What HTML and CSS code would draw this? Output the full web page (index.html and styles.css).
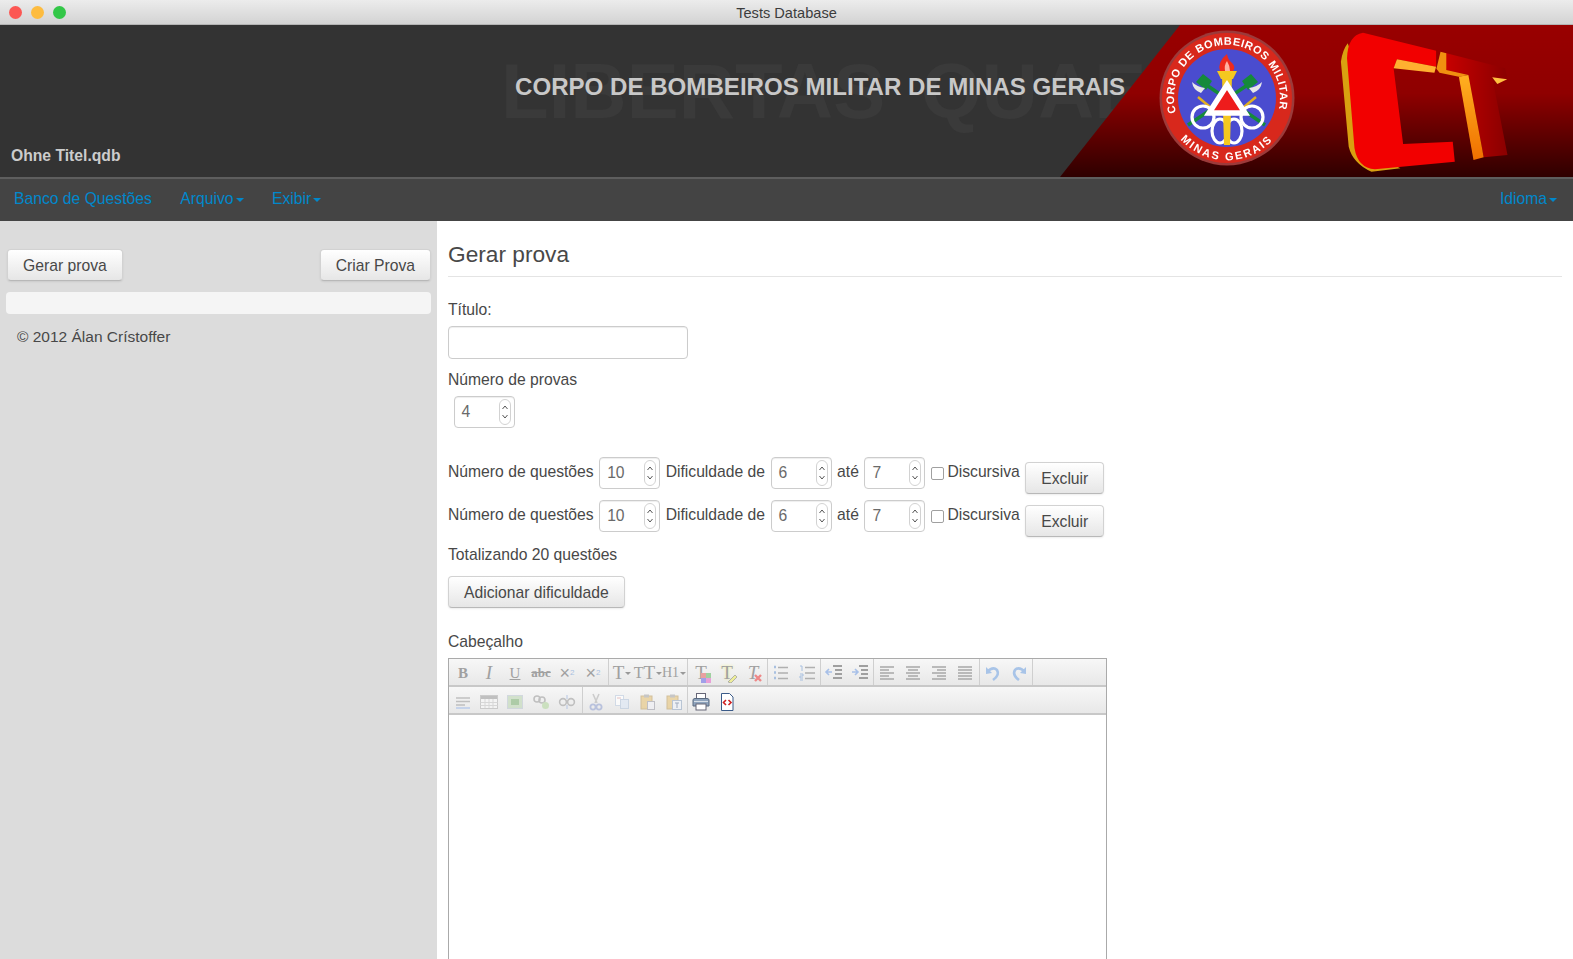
FILE: index.html
```html
<!DOCTYPE html>
<html>
<head>
  <title>Tests Database</title>
  <link rel="stylesheet" href="styles.css">
</head>
<body>

<div class="window">
  <div class="titlebar">
    <div class="lights">
      <span class="light red"></span>
      <span class="light yellow"></span>
      <span class="light green"></span>
    </div>
    <span class="window-title">Tests Database</span>
  </div>

  <div class="banner">
    <svg class="banner-art" viewBox="0 25 1573 152" width="1573" height="152">
      <defs>
        <linearGradient id="redfade" x1="0" y1="0" x2="0" y2="1">
          <stop offset="0" stop-color="#990000"/>
          <stop offset="0.45" stop-color="#8f0000"/>
          <stop offset="1" stop-color="#2e0000"/>
        </linearGradient>
        <linearGradient id="tbar" x1="0" y1="0" x2="1" y2="0">
          <stop offset="0" stop-color="#c80000"/>
          <stop offset="1" stop-color="#8a0000"/>
        </linearGradient>
        <linearGradient id="tstrip" x1="0" y1="0" x2="0" y2="1">
          <stop offset="0" stop-color="#ffb020"/>
          <stop offset="1" stop-color="#f07000"/>
        </linearGradient>
        <path id="ringtop" d="M1176.100 112.600 A 53 53 0 1 1 1277.900 112.600"/>
        <path id="ringbottom" d="M1175 132 A 62 62 0 0 0 1279 132"/>
      </defs>
      <text class="motto" x="501" y="118">LIBERTAS QUAE</text>
      <polygon points="1180,25 1573,25 1573,177 1060,177" fill="url(#redfade)"/>

      <!-- emblem -->
      <circle cx="1227" cy="98" r="67.500" fill="#9c3a3a"/>
      <circle cx="1227" cy="98" r="65" fill="#d8281c"/>
      <circle cx="1227" cy="98" r="49" fill="#4a4ccf"/>
      <text class="ring-text"><textPath href="#ringtop" textLength="192">CORPO DE BOMBEIROS MILITAR</textPath></text>
      <text class="ring-text wide"><textPath href="#ringbottom" startOffset="50%" text-anchor="middle">MINAS GERAIS</textPath></text>
      <g stroke="#158a3a" stroke-width="3.500" fill="none">
        <path d="M1205 84 L1265 125"/>
        <path d="M1249 84 L1188 125"/>
      </g>
      <path d="M1196 82 l7 -8 l9 7 l-6 9 z" fill="#158a3a"/>
      <path d="M1258 82 l-7 -8 l-9 7 l6 9 z" fill="#158a3a"/>
      <path d="M1192 82 q1 8 9 11 l4 -5 q-8 -1 -13 -6z" fill="#e8e8e8"/>
      <path d="M1262 82 q-1 8 -9 11 l-4 -5 q8 -1 13 -6z" fill="#e8e8e8"/>
      <path d="M1198 97 L1210 107 M1256 97 L1244 107" stroke="#e0b020" stroke-width="2.500"/>
      <g stroke="#fff" stroke-width="3.200" fill="none">
        <circle cx="1203" cy="117" r="11"/>
        <circle cx="1252" cy="117" r="11"/>
        <ellipse cx="1220" cy="131" rx="8" ry="12"/>
        <ellipse cx="1234" cy="131" rx="8" ry="12"/>
      </g>
      <path d="M1222 76 h10 l-2 69 h-6 z" fill="#f4c820"/>
      <path d="M1217 71 h20 l-4 8 h-12 z" fill="#f4c820"/>
      <path d="M1220 71 q-3 -9 7 -17 q1 6 5 9 q4 4 1 8 z" fill="#ee2a1c"/>
      <path d="M1225 71 q-1 -6 2 -10 q3 5 3 10 z" fill="#ffb0a0"/>
      <polygon points="1227,85 1209,113 1245,113" fill="#ee1c1c" stroke="#fff" stroke-width="5.500" stroke-linejoin="miter"/>

      <!-- CT logo, coordinates traced from the crop -->
      <g transform="translate(1040 0) scale(0.34 0.3333)">
        <path d="M905 130 Q890 150 885 185 L908 440 Q920 490 975 515 L1060 505 L990 470 L930 200 Z" fill="#d9a010"/>
        <path d="M950 98 Q905 105 903 175 L925 445 Q935 505 985 508 L1220 485 L1214 425 L1068 432 L1040 205 L1050 178 L1165 200 L1165 152 Z" fill="#f20000"/>
        <path d="M1050 178 L1165 200 L1160 218 L1040 205 Z" fill="#ffb030"/>
        <path d="M1190 158 L1368 205 L1374 232 L1330 232 L1375 465 L1305 472 L1260 225 L1195 210 Z" fill="url(#tbar)"/>
        <path d="M1178 155 L1195 160 L1195 210 L1260 225 L1232 230 L1175 218 L1166 206 Z" fill="#f09010"/>
        <path d="M1232 230 L1260 225 L1305 472 L1275 480 Z" fill="url(#tstrip)"/>
        <path d="M1330 232 L1374 238 L1345 252 Z" fill="#ffc040"/>
      </g>
    </svg>
    <h1 class="banner-title">CORPO DE BOMBEIROS MILITAR DE MINAS GERAIS</h1>
    <span class="file-name">Ohne Titel.qdb</span>
  </div>

  <div class="navbar">
    <a class="brand">Banco de Questões</a>
    <a class="menu">Arquivo<i class="caret"></i></a>
    <a class="menu">Exibir<i class="caret"></i></a>
    <a class="menu language">Idioma<i class="caret"></i></a>
  </div>

  <div class="content">
    <div class="sidebar">
      <div class="side-buttons">
        <button class="btn">Gerar prova</button>
        <button class="btn">Criar Prova</button>
      </div>
      <div class="well"></div>
      <p class="copyright">© 2012 Álan Crístoffer</p>
    </div>

    <div class="main">
      <h2 class="page-title">Gerar prova</h2>

      <label class="field-label">Título:</label>
      <input type="text" class="text-input">

      <label class="field-label second">Número de provas</label>
      <div class="spinner exams"><span>4</span><svg viewBox="0 0 12 26"><rect x="0.5" y="0.5" width="11" height="25" rx="5.5"/><path d="M3.5 10 L6 7 L8.5 10 M3.5 16 L6 19 L8.5 16"/></svg></div>

      <div class="difficulty first">
        <span>Número de questões</span>
        <div class="spinner"><span>10</span><svg viewBox="0 0 12 26"><rect x="0.5" y="0.5" width="11" height="25" rx="5.5"/><path d="M3.5 10 L6 7 L8.5 10 M3.5 16 L6 19 L8.5 16"/></svg></div>
        <span>Dificuldade de</span>
        <div class="spinner"><span>6</span><svg viewBox="0 0 12 26"><rect x="0.5" y="0.5" width="11" height="25" rx="5.5"/><path d="M3.5 10 L6 7 L8.5 10 M3.5 16 L6 19 L8.5 16"/></svg></div>
        <span>até</span>
        <div class="spinner"><span>7</span><svg viewBox="0 0 12 26"><rect x="0.5" y="0.5" width="11" height="25" rx="5.5"/><path d="M3.5 10 L6 7 L8.5 10 M3.5 16 L6 19 L8.5 16"/></svg></div>
        <i class="checkbox"></i>
        <span>Discursiva</span>
        <button class="btn remove">Excluir</button>
      </div>
      <div class="difficulty">
        <span>Número de questões</span>
        <div class="spinner"><span>10</span><svg viewBox="0 0 12 26"><rect x="0.5" y="0.5" width="11" height="25" rx="5.5"/><path d="M3.5 10 L6 7 L8.5 10 M3.5 16 L6 19 L8.5 16"/></svg></div>
        <span>Dificuldade de</span>
        <div class="spinner"><span>6</span><svg viewBox="0 0 12 26"><rect x="0.5" y="0.5" width="11" height="25" rx="5.5"/><path d="M3.5 10 L6 7 L8.5 10 M3.5 16 L6 19 L8.5 16"/></svg></div>
        <span>até</span>
        <div class="spinner"><span>7</span><svg viewBox="0 0 12 26"><rect x="0.5" y="0.5" width="11" height="25" rx="5.5"/><path d="M3.5 10 L6 7 L8.5 10 M3.5 16 L6 19 L8.5 16"/></svg></div>
        <i class="checkbox"></i>
        <span>Discursiva</span>
        <button class="btn remove">Excluir</button>
      </div>

      <p class="total">Totalizando 20 questões</p>
      <button class="btn add">Adicionar dificuldade</button>

      <label class="field-label header-label">Cabeçalho</label>
      <div class="editor">
        <div class="toolbar">
          <div class="tool-group">
            <span class="tool t-serif bold">B</span>
            <span class="tool t-serif italic big">I</span>
            <span class="tool t-serif under">U</span>
            <span class="tool t-serif strike">abc</span>
            <span class="tool t-sign">×<sub>2</sub></span>
            <span class="tool t-sign">×<sup>2</sup></span>
          </div>
          <div class="tool-group">
            <span class="tool t-serif big">T<i class="mini-caret"></i></span>
            <span class="tool t-serif big"><small>T</small>T<i class="mini-caret"></i></span>
            <span class="tool t-serif">H1<i class="mini-caret"></i></span>
          </div>
          <div class="tool-group pad">
            <span class="tool t-serif big">T<svg class="corner" viewBox="0 0 10 10"><rect width="5" height="5" fill="#e8a0a0"/><rect x="5" width="5" height="5" fill="#a0d0a0"/><rect y="5" width="5" height="5" fill="#a0a0e8"/><rect x="5" y="5" width="5" height="5" fill="#e8a0d8"/></svg></span>
            <span class="tool t-serif big marker">T<svg class="corner" viewBox="0 0 10 10"><path d="M1 9 L8 2 L10 4 L4 10 Z" fill="#eeee99" stroke="#999" stroke-width="0.7"/></svg></span>
            <span class="tool t-serif big italic">T<svg class="corner" viewBox="0 0 10 10"><path d="M2 2 L8 8 M8 2 L2 8" stroke="#ee8888" stroke-width="2.4"/></svg></span>
          </div>
          <div class="tool-group">
            <span class="tool"><svg class="ico" viewBox="0 0 20 20"><path d="M3 4h2M3 9.500h2M3 15h2" stroke="#a8c0e0" stroke-width="2.400"/><path d="M7 4.500h10M7 10h10M7 15.500h10" stroke="#b0b0b0" stroke-width="1.500"/></svg></span>
            <span class="tool"><svg class="ico" viewBox="0 0 20 20"><path d="M3 3h2v5M3 11h3v2h-3v2h3M3 17h3" stroke="#a8c0e0" fill="none"/><path d="M8 4.500h10M8 10h10M8 15.500h10" stroke="#b0b0b0" stroke-width="1.500"/></svg></span>
          </div>
          <div class="tool-group">
            <span class="tool"><svg class="ico" viewBox="0 0 20 20"><path d="M9 3h9M11 7h7M11 11h7M9 15h9" stroke="#a0a0a0" stroke-width="2"/><path d="M8 9H2M5 6L2 9l3 3" stroke="#a8c0e8" stroke-width="1.600" fill="none"/></svg></span>
            <span class="tool"><svg class="ico" viewBox="0 0 20 20"><path d="M9 3h9M11 7h7M11 11h7M9 15h9" stroke="#a0a0a0" stroke-width="2"/><path d="M2 9h6M5 6l3 3-3 3" stroke="#a8c0e8" stroke-width="1.600" fill="none"/></svg></span>
          </div>
          <div class="tool-group pad">
            <span class="tool"><svg class="ico" viewBox="0 0 20 20"><path d="M3 4h14M3 7h9M3 10h14M3 13h9M3 16h14" stroke="#a8a8a8" stroke-width="1.500"/></svg></span>
            <span class="tool"><svg class="ico" viewBox="0 0 20 20"><path d="M3 4h14M5 7h10M3 10h14M5 13h10M3 16h14" stroke="#a8a8a8" stroke-width="1.500"/></svg></span>
            <span class="tool"><svg class="ico" viewBox="0 0 20 20"><path d="M3 4h14M8 7h9M3 10h14M8 13h9M3 16h14" stroke="#a8a8a8" stroke-width="1.500"/></svg></span>
            <span class="tool"><svg class="ico" viewBox="0 0 20 20"><path d="M3 4h14M3 7h14M3 10h14M3 13h14M3 16h14" stroke="#a8a8a8" stroke-width="1.500"/></svg></span>
          </div>
          <div class="tool-group">
            <span class="tool"><svg class="ico" viewBox="0 0 20 20"><path d="M4 9 Q10 3 14 7 Q17 12 10 17" stroke="#a8c4e8" stroke-width="2.600" fill="none"/><path d="M3 4 L3 11 L9 10 Z" fill="#a8c4e8"/></svg></span>
            <span class="tool"><svg class="ico" viewBox="0 0 20 20"><path d="M16 9 Q10 3 6 7 Q3 12 10 17" stroke="#a8c4e8" stroke-width="2.600" fill="none"/><path d="M17 4 L17 11 L11 10 Z" fill="#a8c4e8"/></svg></span>
          </div>
        </div>

        <div class="toolbar lower">
          <div class="tool-group">
            <span class="tool dim"><svg class="ico" viewBox="0 0 20 20"><path d="M3 6h14M3 9.500h14M3 13h9" stroke="#b0b0b0" stroke-width="1.500"/><path d="M3 16h14" stroke="#a8c0e8" stroke-width="1.500"/></svg></span>
            <span class="tool dim"><svg class="ico" viewBox="0 0 20 20"><rect x="1.500" y="3.500" width="17" height="13" fill="#f6f6f6" stroke="#c0c0c0"/><rect x="2" y="4" width="16" height="3" fill="#b0b0b0"/><path d="M1.500 10.500h17M1.500 13.500h17M6 7v9M10 7v9M14 7v9" stroke="#d0d0d0"/></svg></span>
            <span class="tool dim"><svg class="ico" viewBox="0 0 20 20"><rect x="2.500" y="3.500" width="15" height="13" fill="#c8dcc0" stroke="#c8d0d8"/><path d="M6 7h8v6H6z" fill="#98c090"/></svg></span>
            <span class="tool dim"><svg class="ico" viewBox="0 0 20 20"><circle cx="6" cy="7" r="3" stroke="#b0b0b0" stroke-width="1.600" fill="none"/><circle cx="11" cy="8" r="3" stroke="#b0b0b0" stroke-width="1.600" fill="none"/><circle cx="14.500" cy="13.500" r="3.500" fill="#c0dcb0"/></svg></span>
            <span class="tool dim"><svg class="ico" viewBox="0 0 20 20"><circle cx="6" cy="10" r="3.400" stroke="#b0b0b0" stroke-width="1.600" fill="none"/><circle cx="14" cy="10" r="3.400" stroke="#b0b0b0" stroke-width="1.600" fill="none"/><path d="M10 3v4M10 13v4" stroke="#b8c8e4" stroke-width="1.400"/></svg></span>
          </div>
          <div class="tool-group">
            <span class="tool dim"><svg class="ico" viewBox="0 0 20 20"><path d="M7 2l4 9M13 2l-4 9" stroke="#c0c0c0" stroke-width="1.600"/><circle cx="7" cy="15" r="2.600" stroke="#a8b4d8" stroke-width="1.800" fill="none"/><circle cx="13" cy="15" r="2.600" stroke="#a8b4d8" stroke-width="1.800" fill="none"/></svg></span>
            <span class="tool dim"><svg class="ico" viewBox="0 0 20 20"><rect x="3.500" y="3.500" width="8" height="10" fill="#fff" stroke="#c8d4e4"/><rect x="8.500" y="7.500" width="8" height="9" fill="#dfe8f4" stroke="#c0cee0"/><path d="M5 6h4" stroke="#e0b0b0"/></svg></span>
            <span class="tool dim"><svg class="ico" viewBox="0 0 20 20"><rect x="3" y="4" width="11" height="13" fill="#e8cc90" stroke="#c8b080"/><rect x="6" y="2.500" width="5" height="3" fill="#b8b8b8"/><rect x="9.500" y="9.500" width="7" height="8" fill="#f0f0f4" stroke="#b0b0b8"/></svg></span>
            <span class="tool dim"><svg class="ico" viewBox="0 0 20 20"><rect x="3" y="4" width="11" height="13" fill="#e8cc90" stroke="#c8b080"/><rect x="6" y="2.500" width="5" height="3" fill="#b8b8b8"/><rect x="8.500" y="8.500" width="9" height="9" fill="#eef2f8" stroke="#a8b8cc"/><path d="M11 11h4M13 11v5" stroke="#8898b0"/></svg></span>
          </div>
          <div class="tool-group plain">
            <span class="tool"><svg class="ico" viewBox="0 0 20 20"><rect x="5.500" y="1.500" width="9" height="6" fill="#fff" stroke="#667"/><path d="M2 8 Q2 6.500 4 6.500 H16 Q18 6.500 18 8 V14 H2 Z" fill="#8fa4bd" stroke="#5a6a80"/><rect x="5" y="12" width="10" height="6" fill="#fff" stroke="#667"/><path d="M3 9.500h14" stroke="#d8e0e8"/></svg></span>
            <span class="tool"><svg class="ico" viewBox="0 0 20 20"><path d="M4.500 1.500h8l3.500 3.500v13.500h-11.500z" fill="#fff" stroke="#3a5a88"/><path d="M9 8 L6.500 10.500 L9 13" stroke="#d02020" stroke-width="1.600" fill="none"/><path d="M11.500 8 L14 10.500 L11.500 13" stroke="#d02020" stroke-width="1.600" fill="none"/></svg></span>
          </div>
        </div>

        <div class="editor-body"></div>
      </div>
    </div>
  </div>
</div>

</body>
</html>
```
FILE: styles.css
```css
body {
  font-family: "Liberation Sans", Arial, sans-serif;
  font-size: 15.7px;
  color: #484848;
  background-color: #fff;
  margin: 0;
}

.window {
  height: 959px;
  display: flex;
  flex-direction: column;
  overflow: hidden;
}

.titlebar {
  height: 24px;
  flex: none;
  display: flex;
  align-items: center;
  justify-content: center;
  position: relative;
  background: linear-gradient(#ececec, #d3d3d3);
  border-bottom: 1px solid #b4b4b4;
}

.lights {
  position: absolute;
  left: 9px;
  top: 6px;
  display: flex;
  gap: 9px;
}

.light {
  width: 13px;
  height: 13px;
  border-radius: 50%;
}

.light.red { background-color: #fc5753; }
.light.yellow { background-color: #fdbc40; }
.light.green { background-color: #33c748; }

.window-title {
  padding-top: 1px;
  font-size: 14.6px;
  color: #3c3c3c;
}

.banner {
  height: 152px;
  flex: none;
  position: relative;
  display: flex;
  align-items: flex-end;
  background-color: #333;
  border-bottom: 2px solid #5e5e5e;
}

.banner-art {
  position: absolute;
  left: 0;
  top: 0;
  filter: blur(0.4px);
}

.motto {
  font-size: 78px;
  font-weight: bold;
  word-spacing: 14px;
  fill: #3a3a3a;
}

.ring-text {
  font-size: 11px;
  font-weight: bold;
  fill: #fff;
}

.ring-text.wide {
  letter-spacing: 2px;
}

.banner-title {
  position: absolute;
  left: 515px;
  top: 48px;
  margin: 0;
  font-size: 24.1px;
  font-weight: bold;
  color: #c8c8c8;
  white-space: nowrap;
}

.file-name {
  position: relative;
  margin: 0 0 12px 11px;
  font-weight: bold;
  color: #ccc;
}

.navbar {
  height: 40px;
  flex: none;
  display: flex;
  align-items: center;
  gap: 28.5px;
  padding: 0 14px 2px;
  background-color: #444;
  color: #0088cc;
}

.caret {
  display: inline-block;
  margin-left: 2px;
  vertical-align: middle;
  border-top: 4px solid #0088cc;
  border-left: 4px solid transparent;
  border-right: 4px solid transparent;
}

.language {
  margin-left: auto;
  margin-right: 2px;
}

.content {
  flex: 1;
  display: flex;
  min-height: 0;
}

.sidebar {
  width: 425px;
  flex: none;
  padding: 28px 6px 0;
  background-color: #dcdcdc;
}

.side-buttons {
  display: flex;
  justify-content: space-between;
  padding: 0 0 0 1px;
}

.btn {
  height: 32px;
  padding: 1px 15px 0;
  font-family: inherit;
  font-size: 15.7px;
  color: #484848;
  background: linear-gradient(#fff, #e6e6e6);
  border: 1px solid #d2d2d2;
  border-bottom-color: #b8b8b8;
  border-radius: 4px;
  box-shadow: 0 1px 2px rgba(0, 0, 0, 0.08);
}

.well {
  height: 22px;
  margin-top: 11px;
  background-color: #f5f5f5;
  border-radius: 4px;
}

.copyright {
  margin: 13px 0 0 11px;
  font-size: 15.5px;
  line-height: 20px;
}

.main {
  flex: 1;
  padding: 0 11px 0 11px;
  min-width: 0;
}

.page-title {
  margin: 19px 0 0;
  padding-bottom: 8px;
  font-size: 22.7px;
  font-weight: normal;
  line-height: 28px;
  border-bottom: 1px solid #e4e4e4;
}

.field-label {
  display: block;
  line-height: 20px;
  margin-top: 23px;
}

.field-label.second {
  margin-top: 11px;
}

.text-input {
  display: block;
  width: 240px;
  height: 33px;
  margin-top: 6px;
  box-sizing: border-box;
  border: 1px solid #ccc;
  border-radius: 4px;
  box-shadow: inset 0 1px 1px rgba(0, 0, 0, 0.07);
}

.spinner {
  width: 61px;
  height: 32px;
  flex: none;
  box-sizing: border-box;
  display: flex;
  align-items: center;
  justify-content: space-between;
  padding: 0 3px 0 7px;
  color: #6a6a6a;
  background-color: #fff;
  border: 1px solid #ccc;
  border-radius: 4px;
  box-shadow: inset 0 1px 1px rgba(0, 0, 0, 0.07);
}

.spinner svg {
  width: 12px;
  height: 26px;
}

.spinner rect {
  fill: #fff;
  stroke: #d2d2d2;
}

.spinner path {
  fill: none;
  stroke: #555;
}

.spinner.exams {
  margin: 6px 0 0 5.5px;
}

.difficulty {
  display: flex;
  align-items: flex-start;
  gap: 5.5px;
  height: 43px;
  line-height: 30px;
}

.difficulty.first {
  margin-top: 29px;
}

.checkbox {
  width: 13px;
  height: 13px;
  margin-top: 10px;
  margin-right: -2px;
  box-sizing: border-box;
  background-color: #fff;
  border: 1px solid #a0a0a0;
  border-radius: 2px;
}

.remove {
  margin-top: 5px;
}

.total {
  margin: 0;
  line-height: 20px;
  padding-top: 2px;
}

.add {
  display: block;
  margin-top: 11px;
}

.header-label {
  margin-top: 24px;
}

.editor {
  width: 659px;
  margin-top: 6px;
  box-sizing: border-box;
  height: 320px;
  border: 1px solid #aaa;
  border-bottom: none;
}

.toolbar {
  height: 26px;
  padding-left: 1px;
  display: flex;
  align-items: center;
  background: linear-gradient(#f7f7f7, #e8e8e8);
  border-bottom: 2px solid #c8c8c8;
}

.tool-group {
  height: 100%;
  display: flex;
  align-items: center;
  border-right: 1px solid #cfcfcf;
}

.tool-group:first-child {
  padding-right: 2px;
}

.tool-group.pad {
  padding-right: 1px;
}

.tool-group.plain {
  border-right: none;
}

.tool {
  width: 26px;
  height: 24px;
  margin-top: 2px;
  position: relative;
  display: flex;
  align-items: center;
  justify-content: center;
  color: #a0a0a0;
  font-size: 14px;
}

.lower .tool {
  margin-top: 4px;
}

.t-serif {
  font-family: "Liberation Serif", serif;
}

.t-sign {
  font-size: 18px;
  line-height: 18px;
}

.t-sign sub,
.t-sign sup {
  font-size: 8px;
  color: #a8c0e0;
}

.t-serif.big {
  font-size: 19px;
}

.t-serif small {
  font-size: 16px;
}

.bold { font-weight: bold; font-size: 15px; }
.italic { font-style: italic; }
.under { text-decoration: underline; font-size: 15px; }
.strike { text-decoration: line-through; font-weight: bold; font-size: 13px; }

.mini-caret {
  margin-left: 1px;
  border-top: 3px solid #999;
  border-left: 3px solid transparent;
  border-right: 3px solid transparent;
}

.corner {
  position: absolute;
  right: 3px;
  bottom: 2px;
  width: 10px;
  height: 10px;
}

.marker {
  text-shadow: 0 0 3px #eeee88;
}

.ico {
  width: 20px;
  height: 20px;
}

.dim {
  opacity: 0.75;
}

.editor-body {
  height: 100%;
  background-color: #fff;
}
```
